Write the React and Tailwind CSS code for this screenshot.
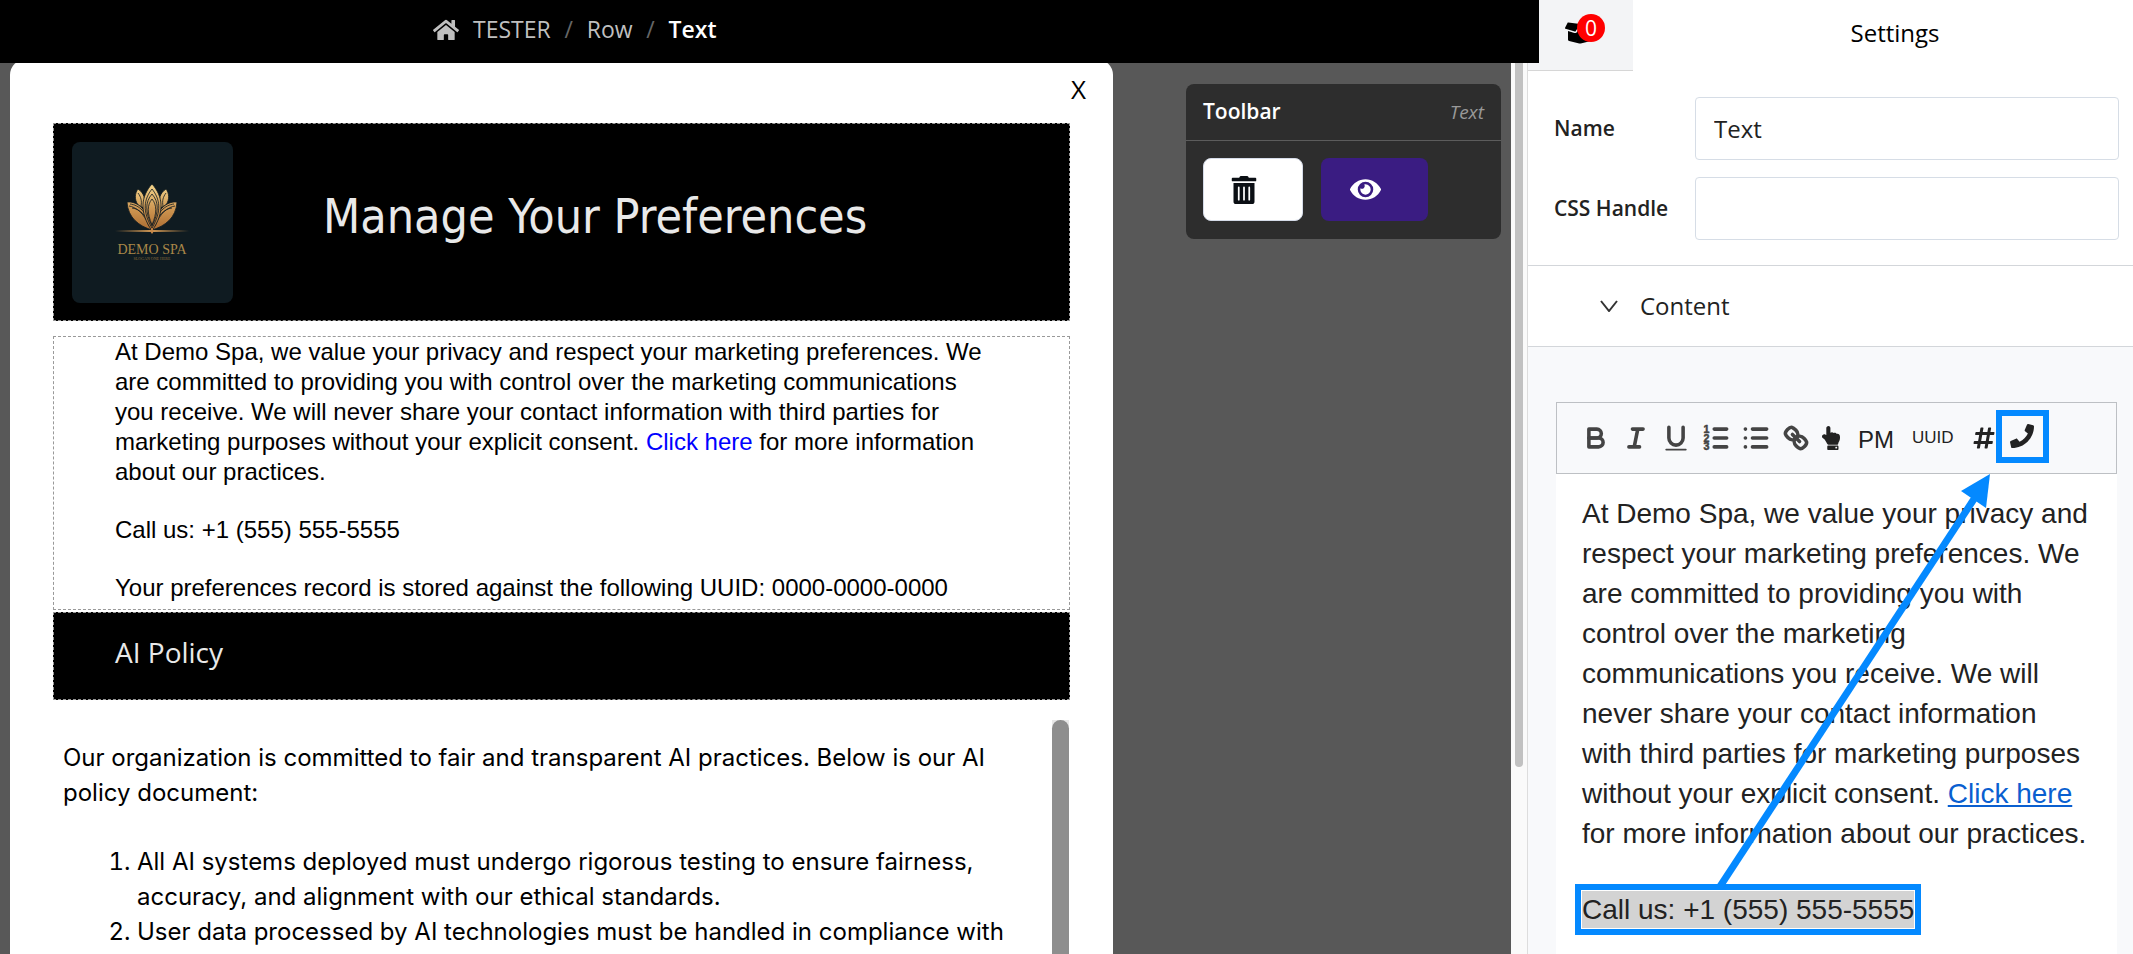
import { useState } from "react";
import {
  FaBoxOpen,
  FaEye,
  FaHandPointUp,
  FaHashtag,
  FaHome,
  FaPhone,
  FaTrashAlt,
} from "react-icons/fa";

const EditorIcon = ({ label, children }) => (
  <button type="button" aria-label={label} className="shrink-0">
    <svg
      viewBox="0 0 18 18"
      className="w-8 h-8"
      fill="none"
      stroke="#444444"
      strokeWidth="2"
      strokeLinecap="round"
      strokeLinejoin="round"
    >
      {children}
    </svg>
  </button>
);

const Logo = () => (
  <svg
    viewBox="0 0 161 161"
    className="w-[161px] h-[161px] shrink-0 rounded-lg bg-[#0f1b21]"
  >
    <defs>
      <linearGradient id="gold" x1="0" y1="43" x2="0" y2="92" gradientUnits="userSpaceOnUse">
        <stop offset="0" stopColor="#f3d48b" />
        <stop offset="0.5" stopColor="#cd9550" />
        <stop offset="1" stopColor="#a5642c" />
      </linearGradient>
      <linearGradient id="shine" x1="43" y1="0" x2="117" y2="0" gradientUnits="userSpaceOnUse">
        <stop offset="0" stopColor="#c08a4a" stopOpacity="0" />
        <stop offset="0.5" stopColor="#d59a55" />
        <stop offset="1" stopColor="#c08a4a" stopOpacity="0" />
      </linearGradient>
    </defs>
    <g fill="url(#gold)" stroke="#0f1b21" strokeWidth="0.8">
      {/* back petals */}
      <path d="M66 47C72 51 74 57 72 66L66 63C62 57 63 51 66 47Z" />
      <path d="M94 47C88 51 86 57 88 66L94 63C98 57 97 51 94 47Z" />
      <path d="M66 51C69 55 70 59 69 64M94 51C91 55 90 59 91 64" fill="none" />
      {/* side petals */}
      <path d="M55 60C66 59 76 68 80 88C67 84 56 76 55 60Z" />
      <path d="M105 60C94 59 84 68 80 88C93 84 104 76 105 60Z" />
      <path d="M58 62C67 63 75 70 79 86M60 66C68 67 74 73 78 85M57 64C64 65 72 71 77 84" fill="none" />
      <path d="M102 62C93 63 85 70 81 86M100 66C92 67 86 73 82 85M103 64C96 65 88 71 83 84" fill="none" />
      {/* centre petal */}
      <path d="M80 42C91 54 93 70 80 89C67 70 69 54 80 42Z" />
      <path d="M80 47C88 57 90 69 80 86C70 69 72 57 80 47Z" fill="none" />
      <path d="M80 52C87 60 87 70 80 84C73 70 73 60 80 52Z" fill="none" />
      <path d="M80 57C85 63 85 71 80 83C75 71 75 63 80 57Z" fill="none" />
    </g>
    <rect x="43" y="88" width="74" height="2" fill="url(#shine)" />
    <path d="M80 86l2 3-2 3-2-3z" fill="#c8894a" />
    <text x="80" y="112" textAnchor="middle" fontSize="14" fill="#a98748" fontFamily="Liberation Serif, serif">
      DEMO SPA
    </text>
    <text x="80" y="118" textAnchor="middle" fontSize="4" fill="#8a6c3c" fontFamily="Liberation Serif, serif">
      SLOGAN ONE HERE
    </text>
  </svg>
);

const Canvas = () => (
  <div className="flex-1 min-w-0 -mt-1 bg-white rounded-t-2xl px-[43px] flex flex-col">
    <div className="h-16 shrink-0 flex justify-end items-center -mr-4 pb-1">
      <button
        type="button"
        className="text-[26px] leading-none text-black"
        aria-label="Close"
      >
        X
      </button>
    </div>

    {/* Header row */}
    <div className="flex items-center bg-black border border-dashed border-[#999999] h-[198px] shrink-0 pl-[18px]">
      <Logo />
      <h1 className="pl-[90px] pb-3 text-[48px] text-[#e9e9e9] whitespace-nowrap font-['DejaVu_Sans_Condensed','DejaVu_Sans',sans-serif]">
        Manage Your Preferences
      </h1>
    </div>

    {/* Text row */}
    <div className="mt-[15px] shrink-0 border border-dashed border-[#999999] pl-[61px] pb-[6px] space-y-7 text-2xl/[30px] text-black whitespace-nowrap font-['Liberation_Sans',sans-serif]">
      <p>
        At Demo Spa, we value your privacy and respect your marketing preferences. We
        <br />
        are committed to providing you with control over the marketing communications
        <br />
        you receive. We will never share your contact information with third parties for
        <br />
        marketing purposes without your explicit consent.{" "}
        <a href="#practices" className="text-[#0000ff]">
          Click here
        </a>{" "}
        for more information
        <br />
        about our practices.
      </p>
      <p>Call us: +1 (555) 555-5555</p>
      <p>
        Your preferences record is stored against the following UUID: 0000-0000-0000
      </p>
    </div>

    {/* AI policy row */}
    <div className="mt-[2px] shrink-0 h-[88px] flex items-center bg-black border border-dashed border-[#999999] pl-[61px] pb-2">
      <h2 className="text-[28px] text-[#e9e9e9]">AI Policy</h2>
    </div>

    <div className="mt-5 flex-1 min-h-0 flex overflow-hidden">
      <div className="flex-1 pt-5 pl-[10px] pr-10 text-2xl/[35px] text-black font-['Inter',sans-serif]">
        <p>
          Our organization is committed to fair and transparent AI practices. Below is our AI
          policy document:
        </p>
        <ol className="list-decimal mt-[34px] pl-[74px]">
          <li>
            All AI systems deployed must undergo rigorous testing to ensure fairness,
            accuracy, and alignment with our ethical standards.
          </li>
          <li className="whitespace-nowrap">
            User data processed by AI technologies must be handled in compliance with
          </li>
        </ol>
      </div>
      <div className="w-[17px] mr-px bg-[#e8e8e8]">
        <div className="h-full rounded-t-full bg-[#8e8e8e]"></div>
      </div>
    </div>
  </div>
);

const Toolbar = () => (
  <div className="w-[315px] shrink-0 mt-[21px] self-start rounded-lg bg-[#2d2d2d]">
    <div className="h-[57px] px-[17px] flex items-center justify-between border-b border-[#5c5c5c]">
      <span className="text-[21px] font-semibold text-white">Toolbar</span>
      <span className="text-[19px] italic text-[#999999]">Text</span>
    </div>
    <div className="flex gap-[18px] px-[17px] pt-[17px] pb-[18px]">
      <button
        type="button"
        aria-label="Delete"
        className="w-[100px] h-[63px] pl-[26px] flex items-center rounded-lg border border-[#d5dbe8] bg-white text-[#0b0f14]"
      >
        <FaTrashAlt className="text-[28px]" />
      </button>
      <button
        type="button"
        aria-label="Preview"
        className="w-[107px] h-[63px] pl-[29px] flex items-center rounded-lg bg-[#3a1c82] text-white"
      >
        <FaEye className="text-[31px]" />
      </button>
    </div>
  </div>
);

const Editor = () => (
  <div className="relative flex-1 flex flex-col">
    <div className="h-[72px] shrink-0 pl-[23px] flex items-center border border-[#bdc0c4] text-[#222222] font-['Liberation_Sans',sans-serif]">
      <div className="flex gap-2">
        <EditorIcon label="Bold">
          <path d="M5,4H9.5A2.5,2.5,0,0,1,12,6.5v0A2.5,2.5,0,0,1,9.5,9H5Z" />
          <path d="M5,9h5.5A2.5,2.5,0,0,1,13,11.5v0A2.5,2.5,0,0,1,10.5,14H5Z" />
        </EditorIcon>
        <EditorIcon label="Italic">
          <path d="M7 4H13M5 14H11M8 14L10 4" />
        </EditorIcon>
        <EditorIcon label="Underline">
          <path d="M5,3V9a4.012,4.012,0,0,0,4,4H9a4.012,4.012,0,0,0,4-4V3" />
          <rect x="3" y="15" width="12" height="1" rx="0.5" fill="#444444" stroke="none" />
        </EditorIcon>
        <EditorIcon label="Ordered list">
          <path d="M8 4H15M8 9H15M8 14H15" />
          <g fill="#444444" stroke="#444444" strokeWidth="0.3" fontSize="6" fontWeight="bold">
            <text x="2" y="6">1</text>
            <text x="2" y="11">2</text>
            <text x="2" y="16">3</text>
          </g>
        </EditorIcon>
        <EditorIcon label="Bullet list">
          <path d="M7 4H15M7 9H15M7 14H15M3 4H3.1M3 9H3.1M3 14H3.1" />
        </EditorIcon>
        <EditorIcon label="Link">
          <path d="M7 7L11 11" />
          <path d="M8.9,4.577a3.476,3.476,0,0,1,.36,4.679A3.476,3.476,0,0,1,4.577,8.9C3.185,7.5,2.035,6.4,4.217,4.217S7.5,3.185,8.9,4.577Z" />
          <path d="M13.423,9.1a3.476,3.476,0,0,0-4.679-.36,3.476,3.476,0,0,0,.36,4.679c1.392,1.392,2.5,2.542,4.679.36S14.815,10.5,13.423,9.1Z" />
        </EditorIcon>
      </div>
      <button type="button" aria-label="Button" className="ml-[7px]">
        <FaHandPointUp className="text-2xl" />
      </button>
      <button type="button" className="ml-[15px] pt-1 text-2xl">
        PM
      </button>
      <button type="button" className="ml-[18px] text-[17px]">
        UUID
      </button>
      <button type="button" aria-label="Number" className="ml-[18px]">
        <FaHashtag className="text-2xl" />
      </button>
      <button
        type="button"
        aria-label="Phone"
        className="w-[53px] h-[53px] mb-1 flex items-center justify-center border-[6px] border-[#0489ff]"
      >
        <FaPhone className="text-2xl" />
      </button>
    </div>

    <div className="flex-1 bg-white px-[26px] pt-5 text-[28px]/[40px] text-[#222222] whitespace-nowrap font-['Liberation_Sans',sans-serif]">
      <p>
        At Demo Spa, we value your privacy and
        <br />
        respect your marketing preferences. We
        <br />
        are committed to providing you with
        <br />
        control over the marketing
        <br />
        communications you receive. We will
        <br />
        never share your contact information
        <br />
        with third parties for marketing purposes
        <br />
        without your explicit consent.{" "}
        <a href="#practices" className="text-[#0a5fd0] underline">
          Click here
        </a>
        <br />
        for more information about our practices.
      </p>
      <p className="mt-9">
        <span className="inline-block leading-[37px] bg-[#d3d3d3] outline-6 outline-offset-1 outline-[#0489ff]">
          Call us: +1 (555) 555-5555
        </span>
      </p>
    </div>

    {/* Arrow from the phone number up to the phone button */}
    <svg
      viewBox="0 0 561 552"
      className="absolute top-0 left-0 w-[561px] h-[552px] pointer-events-none"
    >
      <path d="M163 486L418 97" stroke="#0489ff" strokeWidth="7" />
      <path d="M434 72L405 89L430 106Z" fill="#0489ff" />
    </svg>
  </div>
);

const Settings = () => {
  const [name, setName] = useState("Text");
  const [handle, setHandle] = useState("");

  return (
    <aside className="w-[606px] shrink-0 flex flex-col border-l border-[#dddddd] bg-white text-[#222222]">
      <div className="flex h-[71px] shrink-0">
        <button
          type="button"
          aria-label="Blocks"
          className="relative w-[105px] shrink-0 pl-[37px] pb-1 flex items-center bg-[#f3f4f6] border-b border-[#d6d6d6] text-black"
        >
          <FaBoxOpen className="text-[30px]" />
          <span className="absolute left-[49px] top-[14px] w-7 h-7 rounded-full bg-[#ff0000] text-white text-[21px]/[28px]">
            0
          </span>
        </button>
        <h2 className="flex-1 pl-6 pb-[6px] flex items-center justify-center text-2xl text-black">
          Settings
        </h2>
      </div>

      <div className="shrink-0 pt-[26px] pb-[25px] pl-[26px] pr-[14px] space-y-[17px] border-b border-[#d3d6da]">
        <div className="flex items-center">
          <label htmlFor="name" className="w-[141px] text-[21px] font-semibold">
            Name
          </label>
          <input
            id="name"
            type="text"
            value={name}
            onChange={(e) => setName(e.target.value)}
            className="flex-1 min-w-0 h-[63px] px-[18px] text-2xl border border-[#d6dde6] rounded"
          />
        </div>
        <div className="flex items-center">
          <label htmlFor="handle" className="w-[141px] text-[21px] font-semibold">
            CSS Handle
          </label>
          <input
            id="handle"
            type="text"
            value={handle}
            onChange={(e) => setHandle(e.target.value)}
            className="flex-1 min-w-0 h-[63px] px-[18px] text-2xl border border-[#d6dde6] rounded"
          />
        </div>
      </div>

      <button
        type="button"
        className="shrink-0 h-[81px] pl-[72px] flex items-center gap-[22px] border-b border-[#d3d6da] text-2xl"
      >
        <svg viewBox="0 0 18 12" className="w-[18px] h-3" fill="none" stroke="#333333" strokeWidth="2">
          <path d="M1 1L9 11L17 1" />
        </svg>
        Content
      </button>

      <div className="flex-1 flex flex-col pt-[55px] pl-7 pr-4 bg-[#f8f9fb]">
        <Editor />
      </div>
    </aside>
  );
};

const App = () => {
  return (
    <div className="h-screen flex overflow-hidden font-['Open_Sans',sans-serif]">
      <div className="flex-1 min-w-0 flex flex-col">
        {/* Breadcrumb bar */}
        <nav className="relative z-10 -mr-3 h-[63px] shrink-0 pl-[433px] pb-1 flex items-center bg-black text-[23px] text-[#bfbfbf]">
          <FaHome className="text-[26px]" />
          <a href="#tester" className="ml-[14px]">TESTER</a>
          <span className="w-9 text-center text-[#666666]">/</span>
          <a href="#row">Row</a>
          <span className="w-9 text-center text-[#666666]">/</span>
          <span className="font-semibold text-white">Text</span>
        </nav>

        <div className="flex-1 min-h-0 flex bg-[#585858]">
          <div className="flex-1 min-w-0 flex gap-[73px] px-[10px]">
            <Canvas />
            <Toolbar />
          </div>
          {/* Page scrollbar */}
          <div className="w-4 shrink-0 px-1 bg-[#fafafa]">
            <div className="h-[79%] rounded-b-full bg-[#c1c1c1]"></div>
          </div>
        </div>
      </div>
      <Settings />
    </div>
  );
};

export default App;
